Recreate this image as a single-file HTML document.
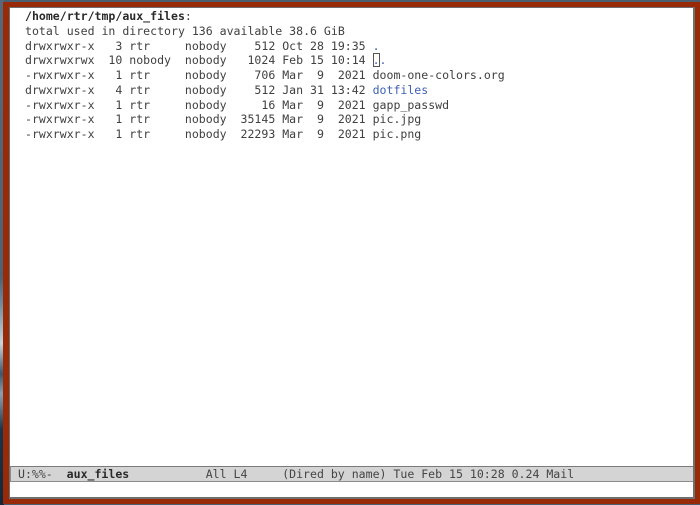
<!DOCTYPE html>
<html>
<head>
<meta charset="utf-8">
<style>
html,body{margin:0;padding:0;width:700px;height:505px;overflow:hidden;background:#4a6070;}
#bgl{position:absolute;left:0;top:0;width:4px;height:505px;background:linear-gradient(180deg,#55697a 0,#4d6375 55%,#6d8a9d 60%,#c8d4da 68%,#3d566b 74%,#8aa0ae 78%,#1c3448 85%,#14283a 100%);}
#frame{position:absolute;left:3px;top:2px;width:697px;height:502px;background:#992a08;}
#grey{position:absolute;left:9px;top:7px;width:686px;height:492px;background:#6f6f72;}
#white{position:absolute;left:10px;top:8px;width:683px;height:489px;background:#fff;}
pre{margin:0;position:absolute;left:25px;font:11.55px/14.75px "DejaVu Sans Mono","Liberation Mono",monospace;color:#404040;white-space:pre;}
b{font-weight:bold;color:#2a2a2a;}
.b{color:#3f60b5;}
#cur{position:absolute;left:373px;top:53px;height:14px;border:1px solid #555;box-sizing:border-box;width:7px;}
#ml{position:absolute;left:10px;top:466px;width:683px;height:16px;box-sizing:border-box;background:#d4d4d4;border-top:1px solid #7a7a7a;border-bottom:1px solid #8c8c8c;border-left:1px solid #8c8c8c;}
#mlt{top:467px;left:18px;line-height:15px;color:#454545;}
</style>
</head>
<body>
<div id="bgl"></div>
<div id="frame"></div>
<div id="grey"></div>
<div id="white"></div>
<pre style="top:9px"><b>/home/rtr/tmp/aux_files</b>:
total used in directory 136 available 38.6 GiB
drwxrwxr-x   3 rtr     nobody    512 Oct 28 19:35 <span class="b">.</span>
drwxrwxrwx  10 nobody  nobody   1024 Feb 15 10:14 <span class="b">..</span>
-rwxrwxr-x   1 rtr     nobody    706 Mar  9  2021 doom-one-colors.org
drwxrwxr-x   4 rtr     nobody    512 Jan 31 13:42 <span class="b">dotfiles</span>
-rwxrwxr-x   1 rtr     nobody     16 Mar  9  2021 gapp_passwd
-rwxrwxr-x   1 rtr     nobody  35145 Mar  9  2021 pic.jpg
-rwxrwxr-x   1 rtr     nobody  22293 Mar  9  2021 pic.png</pre>
<div id="cur"></div>
<div id="ml"></div>
<pre id="mlt">U:%%-  <b>aux_files</b>           All L4     (Dired by name) Tue Feb 15 10:28 0.24 Mail</pre>
</body>
</html>
